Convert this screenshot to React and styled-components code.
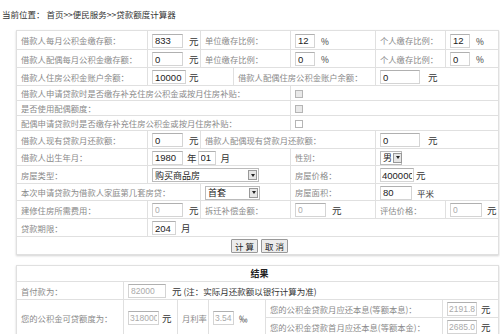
import React from 'react'
import styled, { createGlobalStyle } from 'styled-components'

const GlobalStyle = createGlobalStyle`
    body {
        margin: 0;
        background: #fff;
        font-family: "Noto Sans CJK SC", "Liberation Sans", sans-serif;
    }
`;

const Page = styled.div`
    padding: 8px 2px 3px;
    width: 498px;
`;

const Crumb = styled.div`
    font-size: 8.5px;
    line-height: 12px;
    color: #333;
    margin-bottom: 10px;
`;

const Table = styled.table`
    width: 482px;
    margin-left: 14px;
    border-collapse: collapse;
    table-layout: fixed;
    box-shadow: 0 1px 2px rgba(0, 0, 0, 0.18);
    margin-bottom: ${p => p.$gap || 0}px;
    td {
        border: 1px solid #e0e0e0;
        padding: 0 0 0 4px;
        white-space: nowrap;
        overflow: hidden;
        vertical-align: middle;
    }
`;

const Row = styled.tr`
    height: ${p => p.$h || 18}px;
`;

const Label = styled.td`
    font-size: 8.3px;
    color: #8a8a8a;
`;

const Cell = styled.td`
    font-size: 9.5px;
    color: #333;
    text-align: ${p => (p.$center ? 'center' : 'left')};
`;

const Title = styled.td`
    && {
        text-align: center;
        font-size: 9px;
        font-weight: bold;
        color: #222;
    }
`;

const Field = styled.input`
    box-sizing: border-box;
    width: ${p => p.$w || 31}px;
    height: 14px;
    padding: 0 ${p => (p.$tight ? 1 : 2)}px;
    margin: 0;
    border: 1px solid #d4d4d4;
    border-top-color: #b0b0b0;
    background: #fff;
    font-family: "Liberation Sans", sans-serif;
    font-size: ${p => (p.disabled ? 8.5 : 9.5)}px;
    color: ${p => (p.disabled ? '#aaa' : '#222')};
    vertical-align: middle;
    &:disabled {
        background: #fff;
        color: #aaa;
    }
`;

const Unit = styled.span`
    display: inline-block;
    margin-left: ${p => (p.$gap === undefined ? 6 : p.$gap)}px;
    font-size: ${p => p.$size || 9.5}px;
    color: #333;
    vertical-align: middle;
`;

const Select = styled.span`
    box-sizing: border-box;
    display: inline-flex;
    align-items: center;
    justify-content: space-between;
    gap: 1px;
    width: ${p => p.$w}px;
    height: 14px;
    border: 1px solid #bbb;
    padding-left: 2px;
    font-size: 9px;
    color: #222;
    vertical-align: middle;
    background: #fff;
`;

const Arrow = styled.span`
    box-sizing: border-box;
    flex: none;
    width: 9px;
    height: 10px;
    margin-right: 1px;
    border: 1px solid #999;
    background: #e6e6e6;
    display: flex;
    align-items: center;
    justify-content: center;
    &::after {
        content: '';
        border-left: 2.5px solid transparent;
        border-right: 2.5px solid transparent;
        border-top: 3px solid #222;
    }
`;

const Check = styled.span`
    box-sizing: border-box;
    display: inline-block;
    width: 8px;
    height: 8px;
    border: 1px solid #b5b5b5;
    background: ${p => (p.$dim ? '#e9e9e9' : '#fff')};
    vertical-align: middle;
`;

const Button = styled.button`
    height: 14px;
    padding: 0 3px;
    margin: 0 1.5px;
    border: 1px solid #999;
    border-radius: 1px;
    background: #ececec;
    font-family: "Noto Sans CJK SC", sans-serif;
    font-size: 8.5px;
    line-height: 12px;
    color: #222;
    vertical-align: middle;
`;

const Note = styled.span`
    font-size: 8.5px;
    color: #333;
    vertical-align: middle;
`;

function Dropdown({ w, children }) {
    return (
        <Select $w={w}>
            {children}
            <Arrow />
        </Select>
    )
}

function App() {
    return (
        <Page>
            <GlobalStyle />
            <Crumb>当前位置： 首页&gt;&gt;便民服务&gt;&gt;贷款额度计算器</Crumb>

            <Table $gap={10}>
                <colgroup>
                    <col style={{ width: 131 }} />
                    <col style={{ width: 53 }} />
                    <col style={{ width: 33 }} />
                    <col style={{ width: 57 }} />
                    <col style={{ width: 85 }} />
                    <col style={{ width: 70 }} />
                    <col style={{ width: 53 }} />
                </colgroup>
                <tbody>
                    <Row $h={19}>
                        <Label>借款人每月公积金缴存额：</Label>
                        <Cell><Field defaultValue="833" readOnly /><Unit>元</Unit></Cell>
                        <Label colSpan={2}>单位缴存比例：</Label>
                        <Cell><Field $w={20} defaultValue="12" readOnly /><Unit $size={8.5}>%</Unit></Cell>
                        <Label>个人缴存比例：</Label>
                        <Cell><Field $w={20} defaultValue="12" readOnly /><Unit $size={8.5}>%</Unit></Cell>
                    </Row>
                    <Row>
                        <Label>借款人配偶每月公积金缴存额：</Label>
                        <Cell><Field defaultValue="0" readOnly /><Unit>元</Unit></Cell>
                        <Label colSpan={2}>单位缴存比例：</Label>
                        <Cell><Field $w={20} defaultValue="0" readOnly /><Unit $size={8.5}>%</Unit></Cell>
                        <Label>个人缴存比例：</Label>
                        <Cell><Field $w={20} defaultValue="0" readOnly /><Unit $size={8.5}>%</Unit></Cell>
                    </Row>
                    <Row>
                        <Label>借款人住房公积金账户余额：</Label>
                        <Cell colSpan={2}><Field $w={34} defaultValue="10000" readOnly /><Unit $gap={3}>元</Unit></Cell>
                        <Label colSpan={2}>借款人配偶住房公积金账户余额：</Label>
                        <Cell colSpan={2}><Field $w={40} defaultValue="0" readOnly /><Unit $gap={8}>元</Unit></Cell>
                    </Row>
                    <Row $h={15}>
                        <Label colSpan={4}>借款人申请贷款时是否缴存补充住房公积金或按月住房补贴：</Label>
                        <Cell colSpan={3}><Check $dim /></Cell>
                    </Row>
                    <Row $h={13}>
                        <Label colSpan={4}>是否使用配偶额度：</Label>
                        <Cell colSpan={3}><Check $dim /></Cell>
                    </Row>
                    <Row $h={14}>
                        <Label colSpan={4}>配偶申请贷款时是否缴存补充住房公积金或按月住房补贴：</Label>
                        <Cell colSpan={3}><Check /></Cell>
                    </Row>
                    <Row>
                        <Label>借款人现有贷款月还款额：</Label>
                        <Cell><Field defaultValue="0" readOnly /><Unit>元</Unit></Cell>
                        <Label colSpan={3}>借款人配偶现有贷款月还款额：</Label>
                        <Cell colSpan={2}><Field $w={40} defaultValue="0" readOnly /><Unit $gap={8}>元</Unit></Cell>
                    </Row>
                    <Row $h={17}>
                        <Label>借款人出生年月：</Label>
                        <Cell colSpan={3}>
                            <Field defaultValue="1980" readOnly /><Unit $gap={4}>年</Unit>
                            <Field $w={18} defaultValue="01" readOnly style={{ marginLeft: 1 }} /><Unit $gap={5}>月</Unit>
                        </Cell>
                        <Label>性别：</Label>
                        <Cell colSpan={2}><Dropdown w={22}>男</Dropdown></Cell>
                    </Row>
                    <Row>
                        <Label>房屋类型：</Label>
                        <Cell colSpan={3}><Dropdown w={107}>购买商品房</Dropdown></Cell>
                        <Label>房屋价格：</Label>
                        <Cell colSpan={2}><Field $w={34} $tight defaultValue="400000" readOnly /><Unit $gap={2}>元</Unit></Cell>
                    </Row>
                    <Row $h={17}>
                        <Label colSpan={2}>本次申请贷款为借款人家庭第几套房贷：</Label>
                        <Cell colSpan={2}><Dropdown w={55}>首套</Dropdown></Cell>
                        <Label>房屋面积：</Label>
                        <Cell colSpan={2}><Field $w={32} defaultValue="80" readOnly /><Unit $gap={5} $size={8.5}>平米</Unit></Cell>
                    </Row>
                    <Row>
                        <Label>建修住房所需费用：</Label>
                        <Cell><Field defaultValue="0" disabled /><Unit>元</Unit></Cell>
                        <Label colSpan={2}>拆迁补偿金额：</Label>
                        <Cell><Field $w={31} defaultValue="0" disabled /><Unit>元</Unit></Cell>
                        <Label>评估价格：</Label>
                        <Cell><Field $w={32} defaultValue="0" disabled /><Unit $gap={5}>元</Unit></Cell>
                    </Row>
                    <Row>
                        <Label>贷款期限：</Label>
                        <Cell colSpan={6}><Field $w={24} defaultValue="204" readOnly /><Unit $gap={5}>月</Unit></Cell>
                    </Row>
                    <Row>
                        <Cell colSpan={7} $center>
                            <Button>计 算</Button>
                            <Button>取 消</Button>
                        </Cell>
                    </Row>
                </tbody>
            </Table>

            <Table>
                <colgroup>
                    <col style={{ width: 107 }} />
                    <col style={{ width: 54 }} />
                    <col style={{ width: 31 }} />
                    <col style={{ width: 57 }} />
                    <col style={{ width: 177 }} />
                    <col style={{ width: 56 }} />
                </colgroup>
                <tbody>
                    <Row $h={16}>
                        <Title colSpan={6}>结果</Title>
                    </Row>
                    <Row>
                        <Label>首付款为：</Label>
                        <Cell colSpan={5}>
                            <Field $w={38} defaultValue="82000" disabled />
                            <Unit $gap={6}>元</Unit>
                            <Note> (注：实际月还款额以银行计算为准)</Note>
                        </Cell>
                    </Row>
                    <Row>
                        <Label rowSpan={2}>您的公积金可贷额度为：</Label>
                        <Cell rowSpan={2}><Field $w={31} $tight defaultValue="318000" disabled /><Unit $gap={3}>元</Unit></Cell>
                        <Label rowSpan={2}>月利率</Label>
                        <Cell rowSpan={2}><Field $w={21} $tight defaultValue="3.54166" disabled /><Unit $gap={5} $size={8.5}>‰</Unit></Cell>
                        <Label>您的公积金贷款月应还本息(等额本息)：</Label>
                        <Cell><Field $w={30} $tight defaultValue="2191.84" disabled /><Unit $gap={4}>元</Unit></Cell>
                    </Row>
                    <Row>
                        <Label>您的公积金贷款首月应还本息(等额本金)：</Label>
                        <Cell><Field $w={30} $tight defaultValue="2685.07" disabled /><Unit $gap={4}>元</Unit></Cell>
                    </Row>
                </tbody>
            </Table>
        </Page>
    )
}

export default App
